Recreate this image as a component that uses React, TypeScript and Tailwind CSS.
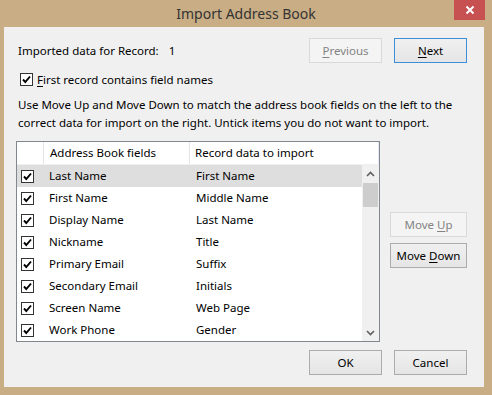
const rows = [
  ["Last Name", "First Name"],
  ["First Name", "Middle Name"],
  ["Display Name", "Last Name"],
  ["Nickname", "Title"],
  ["Primary Email", "Suffix"],
  ["Secondary Email", "Initials"],
  ["Screen Name", "Web Page"],
  ["Work Phone", "Gender"],
];

function Check() {
  return (
    <span className="flex h-[13px] w-[13px] shrink-0 items-center justify-center border border-[#333] bg-white">
      <svg width="11" height="11" viewBox="0 0 11 11">
        <path d="M2 5.5 L4.3 8 L9 2.5" fill="none" stroke="#000" strokeWidth="1.9" />
      </svg>
    </span>
  );
}

function Btn({
  children,
  disabled,
  primary,
}: {
  children: React.ReactNode;
  disabled?: boolean;
  primary?: boolean;
}) {
  const look = disabled
    ? "border-[#d9d9d9] bg-[#f4f4f4] text-[#838383]"
    : primary
      ? "border-[#3c8ddc] bg-gradient-to-b from-[#f0f0f0] to-[#e5e5e5] text-black"
      : "border-[#acacac] bg-gradient-to-b from-[#f0f0f0] to-[#e5e5e5] text-black";
  return (
    <div className={`flex h-[25px] w-[73px] items-center justify-center border ${look}`}>
      {children}
    </div>
  );
}

function Key({ k, rest }: { k: string; rest: string }) {
  return (
    <span>
      <span className="underline underline-offset-2">{k}</span>
      {rest}
    </span>
  );
}

export default function App() {
  return (
    <div className="flex h-[395px] w-[492px] flex-col bg-[#c9ad85] font-['Noto_Sans',sans-serif] text-[11.5px] text-black">
      {/* title bar */}
      <div className="relative flex h-[27px] items-center justify-center">
        <span className="text-[14px] text-[#333]">Import Address Book</span>
        <div className="absolute right-[7px] top-0 flex h-[20px] w-[31px] items-center justify-center bg-[#c75050]">
          <svg width="10" height="10" viewBox="0 0 10 10">
            <path d="M1.5 1.5 L8.5 8.5 M8.5 1.5 L1.5 8.5" stroke="#fff" strokeWidth="2" />
          </svg>
        </div>
      </div>

      {/* client area */}
      <div className="ml-[4px] mr-[8px] flex h-[360px] flex-col bg-[#f0f0f0] pl-[12px] pr-[17px] pt-[11px]">
        <div className="flex h-[25px] items-center pl-[2px]">
          <span>Imported data for Record:</span>
          <span className="ml-[10px]">1</span>
          <div className="ml-auto flex gap-[12px]">
            <Btn disabled>
              <Key k="P" rest="revious" />
            </Btn>
            <Btn primary>
              <Key k="N" rest="ext" />
            </Btn>
          </div>
        </div>

        <div className="mt-[10px] flex h-[13px] items-center gap-[4px] pl-[4px]">
          <Check />
          <span>
            <Key k="F" rest="irst record contains field names" />
          </span>
        </div>

        <p className="mt-[10px] whitespace-nowrap pl-[2px] leading-[18px]">
          Use Move Up and Move Down to match the address book fields on the left to the
          <br />
          correct data for import on the right. Untick items you do not want to import.
        </p>

        <div className="mt-[9px] flex">
          {/* list */}
          <div className="flex h-[201px] w-[365px] flex-col border border-[#828790] bg-white">
            <div className="flex h-[23px] shrink-0 items-center border-b border-[#f0f0f0]">
              <div className="h-full w-[27px] border-r border-[#e5e5e5]" />
              <div className="flex h-full w-[146px] items-center border-r border-[#e5e5e5] pl-[6px]">
                Address Book fields
              </div>
              <div className="flex h-full flex-1 items-center border-r border-[#e3e8f4] pl-[5px]">
                Record data to import
              </div>
            </div>
            <div className="flex flex-1">
              <div className="flex flex-1 flex-col">
                {rows.map(([a, b], i) => (
                  <div
                    key={a}
                    className={`flex h-[22px] items-center ${i === 0 ? "bg-[#dedede]" : ""}`}
                  >
                    <div className="flex w-[28px] pl-[4px]">
                      <Check />
                    </div>
                    <span className="w-[146px] pl-[4px]">{a}</span>
                    <span className="pl-[5px]">{b}</span>
                  </div>
                ))}
              </div>
              <div className="flex w-[17px] flex-col bg-[#f0f0f0]">
                <div className="flex h-[17px] items-center justify-center">
                  <svg width="9" height="6" viewBox="0 0 9 6">
                    <path d="M1 5 L4.5 1.5 L8 5" fill="none" stroke="#606060" strokeWidth="1.6" />
                  </svg>
                </div>
                <div className="mx-[1px] mt-[1px] h-[24px] bg-[#cdcdcd]" />
                <div className="mt-auto flex h-[17px] items-center justify-center">
                  <svg width="9" height="6" viewBox="0 0 9 6">
                    <path d="M1 1 L4.5 4.5 L8 1" fill="none" stroke="#606060" strokeWidth="1.6" />
                  </svg>
                </div>
              </div>
            </div>
          </div>

          <div className="ml-[10px] flex flex-col gap-[6px] pt-[71px]">
            <div className="flex h-[25px] w-[77px] items-center justify-center border border-[#d9d9d9] bg-[#f4f4f4] text-[#838383]">
              <span>
                Move <Key k="U" rest="p" />
              </span>
            </div>
            <div className="flex h-[25px] w-[77px] items-center justify-center border border-[#acacac] bg-gradient-to-b from-[#f0f0f0] to-[#e5e5e5]">
              <span>
                Move <Key k="D" rest="own" />
              </span>
            </div>
          </div>
        </div>

        <div className="mt-[8px] flex justify-end gap-[12px]">
          <Btn>OK</Btn>
          <Btn>Cancel</Btn>
        </div>
      </div>
    </div>
  );
}
